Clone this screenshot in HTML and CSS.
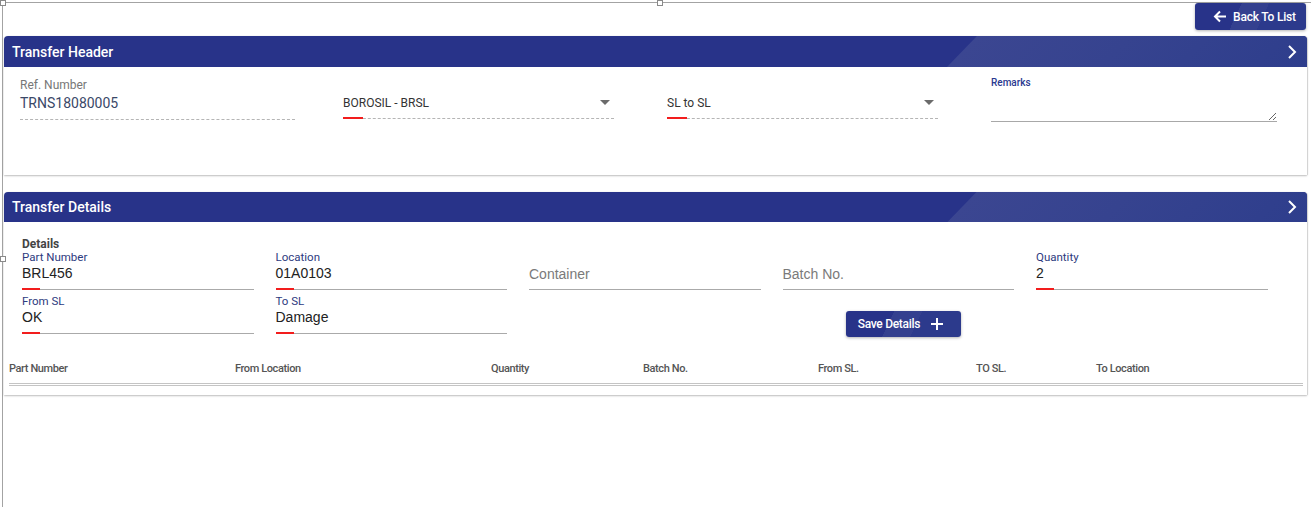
FILE: index.html
```html
<!DOCTYPE html>
<html>
<head>
<meta charset="utf-8">
<link rel="stylesheet" href="styles.css">
</head>
<body>
<div class="frame">
  <span class="handle h-tl"></span>
  <span class="handle h-tm"></span>
  <span class="handle h-lm"></span>

  <div class="toolbar">
    <button class="btn btn-back">
      <svg width="14" height="13" viewBox="0 0 14 13"><path d="M13 6.5H2M7 1.5L2 6.5l5 5" fill="none" stroke="#fff" stroke-width="2"/></svg>
      <span>Back To List</span>
    </button>
  </div>

  <section class="panel panel-header">
    <div class="panel-head">
      <span class="panel-title">Transfer Header</span>
      <svg class="chev" width="10" height="16" viewBox="0 0 10 16"><path d="M2 2l6 6-6 6" fill="none" stroke="#fff" stroke-width="2"/></svg>
    </div>
    <div class="panel-body head-grid">
      <div class="hf hf-ref">
        <div class="hf-label">Ref. Number</div>
        <div class="hf-value">TRNS18080005</div>
      </div>
      <div class="hf hf-sel">
        <div class="sel">
          <span>BOROSIL - BRSL</span>
          <span class="caret"></span>
          <span class="red"></span>
        </div>
      </div>
      <div class="hf hf-sel">
        <div class="sel">
          <span>SL to SL</span>
          <span class="caret"></span>
          <span class="red"></span>
        </div>
      </div>
      <div class="hf hf-rem">
        <div class="rem-label">Remarks</div>
        <textarea class="rem-input"></textarea>
      </div>
    </div>
  </section>

  <section class="panel panel-details">
    <div class="panel-head">
      <span class="panel-title">Transfer Details</span>
      <svg class="chev" width="10" height="16" viewBox="0 0 10 16"><path d="M2 2l6 6-6 6" fill="none" stroke="#fff" stroke-width="2"/></svg>
    </div>
    <div class="panel-body">
      <div class="details">
        <div class="details-title">Details</div>
        <div class="fgrid">
          <div class="fld">
            <div class="fld-label">Part Number</div>
            <div class="fld-input">BRL456<span class="red"></span></div>
          </div>
          <div class="fld">
            <div class="fld-label">Location</div>
            <div class="fld-input">01A0103<span class="red"></span></div>
          </div>
          <div class="fld">
            <div class="fld-label"></div>
            <div class="fld-input ph">Container</div>
          </div>
          <div class="fld">
            <div class="fld-label"></div>
            <div class="fld-input ph">Batch No.</div>
          </div>
          <div class="fld">
            <div class="fld-label">Quantity</div>
            <div class="fld-input">2<span class="red"></span></div>
          </div>
          <div class="fld">
            <div class="fld-label">From SL</div>
            <div class="fld-input">OK<span class="red"></span></div>
          </div>
          <div class="fld">
            <div class="fld-label">To SL</div>
            <div class="fld-input">Damage<span class="red"></span></div>
          </div>
          <div class="save-cell">
            <button class="btn btn-save">
              <span>Save Details</span>
              <svg width="12" height="12" viewBox="0 0 12 12"><path d="M6 0v12M0 6h12" stroke="#fff" stroke-width="2"/></svg>
            </button>
          </div>
        </div>
      </div>
      <div class="table-wrap">
        <div class="thead">
          <span>Part Number</span>
          <span>From Location</span>
          <span>Quantity</span>
          <span>Batch No.</span>
          <span>From SL.</span>
          <span>TO SL.</span>
          <span>To Location</span>
        </div>
      </div>
    </div>
  </section>
</div>
</body>
</html>
```

FILE: styles.css
```css
* { box-sizing: border-box; }
html, body { margin: 0; padding: 0; background: #fff; }
body { font-family: Roboto, "Liberation Sans", sans-serif; overflow: hidden; }

.frame {
  position: relative;
  margin: 2px 0 0 2px;
  height: 505px;
  border-top: 1px solid #a3a3a3;
  border-left: 1px solid #a3a3a3;
  padding: 0 4px 0 1px;
}
.handle {
  position: absolute;
  width: 6px; height: 6px;
  background: #fff;
  border: 1px solid #8a8a8a;
}
.h-tl { left: -3px; top: -3px; }
.h-tm { left: 654px; top: -3px; }
.h-lm { left: -3px; top: 253px; }

.toolbar {
  display: flex;
  justify-content: flex-end;
  padding-right: 1px;
  margin-bottom: 6px;
}
.btn {
  border: none;
  color: #fff;
  font-family: Roboto, sans-serif;
  font-weight: 500;
  display: flex;
  align-items: center;
  border-radius: 3px;
  background: linear-gradient(115deg, #283389 0 38%, #34408f 38% 60%, #2c3a8c 60% 100%);
  box-shadow: 0 1px 3px rgba(0,0,0,0.3);
  cursor: pointer;
}
.btn-back {
  height: 27px;
  width: 111px;
  padding: 0 0 0 18px;
  font-size: 12px;
  letter-spacing: -0.2px;
  gap: 6px;
}
.btn-save {
  height: 26px;
  width: 115px;
  padding: 0 0 0 12px;
  font-size: 12px;
  letter-spacing: -0.3px;
  gap: 11px;
}

.panel {
  background: #fff;
  box-shadow: 0 1px 2px rgba(0,0,0,0.25), 1px 0 1px rgba(0,0,0,0.12);
  border-radius: 4px 4px 0 0;
}
.panel-details { margin-top: 17px; }
.panel-head {
  position: relative;
  overflow: hidden;
  height: 31px;
  background: #283389;
  border-radius: 4px 4px 0 0;
  display: flex;
  align-items: center;
  justify-content: space-between;
  padding: 0 10px 0 8px;
}
.panel-details .panel-head { height: 30px; }
.panel-head::before {
  content: "";
  position: absolute;
  top: 0; bottom: 0;
  left: 958px; right: -40px;
  background: linear-gradient(to right, #3b4691 0%, #36438f 40%, #2d3d8c 100%);
  transform: skewX(-44deg);
}
.panel-title, .chev { position: relative; }
.panel-title {
  color: #fff;
  font-size: 14px;
  font-weight: 500;
}

/* header fields */
.head-grid {
  height: 108px;
  display: grid;
  grid-template-columns: 323px 324px 324px 1fr;
  padding-left: 16px;
  align-items: start;
}
.hf-ref { width: 275px; padding-top: 11px; }
.hf-sel { width: 271px; padding-top: 28px; }
.hf-rem { width: 286px; padding-top: 10px; }
.hf-label {
  font-size: 12px;
  line-height: 14px;
  color: #777;
}
.hf-value {
  font-size: 14px;
  line-height: 18px;
  color: #3a4868;
  padding: 2px 0 7px;
  border-bottom: 1px dashed #b5b5b5;
}
.sel {
  position: relative;
  font-size: 12px;
  line-height: 16px;
  color: #333;
  padding-bottom: 7px;
  border-bottom: 1px dashed #b5b5b5;
}
.caret {
  position: absolute;
  right: 4px; top: 5px;
  width: 0; height: 0;
  border-left: 5px solid transparent;
  border-right: 5px solid transparent;
  border-top: 5px solid #6b6b6b;
}
.red {
  position: absolute;
  left: 0; bottom: -1px;
  width: 18px; height: 2px;
  background: #f21d1d;
}
.sel .red { width: 20px; }
.rem-label {
  font-size: 10px;
  line-height: 12px;
  font-weight: 500;
  color: #2b3990;
}
.rem-input {
  display: block;
  width: 286px;
  height: 33px;
  border: none;
  border-bottom: 1px solid #a8a8a8;
  outline: none;
  padding: 0;
  margin: 0;
  font-family: inherit;
}

/* details */
.details { padding: 17px 0 0 18px; }
.details-title {
  font-size: 12px;
  line-height: 11px;
  font-weight: 700;
  color: #444;
}
.fgrid {
  display: grid;
  grid-template-columns: repeat(5, 231.5px);
  column-gap: 22px;
  row-gap: 4px;
}
.fld-label {
  font-size: 11.5px;
  line-height: 14px;
  height: 14px;
  color: #2d3a7e;
}
.fld-input {
  position: relative;
  font-family: "Liberation Sans", Arial, sans-serif;
  font-size: 14px;
  line-height: 18px;
  color: #222;
  padding-bottom: 7px;
  border-bottom: 1px solid #aaa;
}
.fld-input.ph { color: #7a7a7a; padding-top: 1px; padding-bottom: 6px; }
.save-cell {
  grid-column: 3 / span 3;
  display: flex;
  justify-content: center;
  padding: 17px 0 0 10px;
}

.table-wrap { padding: 19px 4px 9px 5px; }
.thead {
  display: grid;
  grid-template-columns: 226px 256px 152px 175px 158px 120px 1fr;
  font-size: 11px;
  line-height: 14px;
  color: #555;
  font-weight: 500;
  letter-spacing: -0.4px;
  padding: 6px 0 7px;
  border-bottom: 3px double #c4c4c4;
}
```
